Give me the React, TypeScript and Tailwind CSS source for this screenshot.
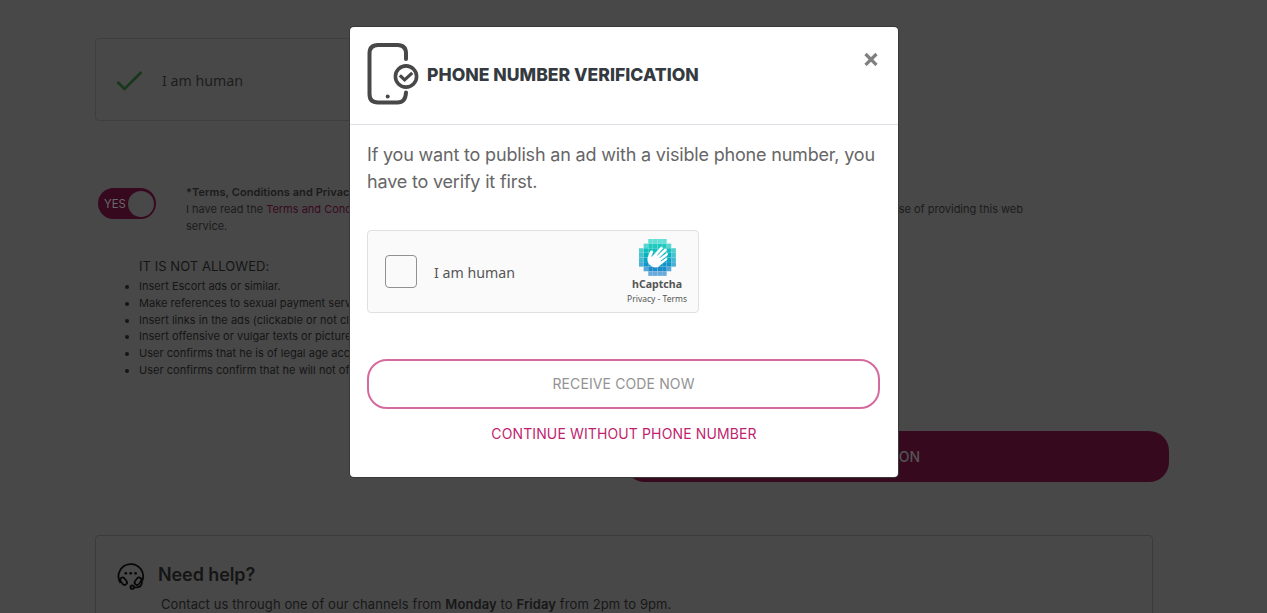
import React from "react";

const RULES = [
  "Insert Escort ads or similar.",
  "Make references to sexual payment services.",
  "Insert links in the ads (clickable or not clickable).",
  "Insert offensive or vulgar texts or pictures.",
  "User confirms that he is of legal age according to law.",
  "User confirms confirm that he will not offend others.",
];

const ROW_SPANS: [number, number][] = [
  [2, 5],
  [1, 6],
  [0, 7],
  [0, 7],
  [0, 7],
  [0, 7],
  [1, 6],
  [2, 5],
];
const ROW_COLORS = ["#2fd5c9", "#1fcabf", "#12bfbf", "#08b2bf", "#08a6c4", "#1095c8", "#1c8bca", "#3a8fd0"];

function CaptchaLogo() {
  return (
    <svg width="37" height="37" viewBox="0 0 32 32">
      {ROW_SPANS.map(([from, to], row) =>
        Array.from({ length: to - from + 1 }, (_, i) => {
          const col = from + i;
          const edge = col === from || col === to || row === 0 || row === 7;
          return (
            <rect
              key={`${row}-${col}`}
              x={col * 4}
              y={row * 4}
              width="3.9"
              height="3.9"
              fill={ROW_COLORS[row]}
              opacity={edge ? 0.75 : 1}
            />
          );
        }),
      )}
      <path
        fill="#fff"
        d="M10.7551 14.6488L11.8729 12.1471C12.2759 11.506 12.2231 10.7222 11.7872 10.2863C11.7295 10.2286 11.6636 10.1742 11.5894 10.1264C11.2827 9.9401 10.9085 9.89559 10.5672 10.001C10.1913 10.1231 9.86814 10.3704 9.65049 10.7002C9.65049 10.7002 8.12043 14.2696 7.55325 15.8657C6.98607 17.4617 7.21361 20.3868 9.39165 22.5681C11.7031 24.8796 15.0352 25.4072 17.1639 23.8095C17.2562 23.7634 17.3435 23.7073 17.4228 23.6397L23.9805 18.1632C24.2987 17.8994 24.7708 17.3537 24.3471 16.733C23.9333 16.1279 23.1512 16.5401 22.8297 16.7462L19.0555 19.4909C18.9846 19.5503 18.8791 19.5404 18.8198 19.4694L18.8164 19.4645C18.7175 19.3441 18.701 19.0275 18.8527 18.9022L24.6387 13.9906C25.1399 13.5404 25.2091 12.8843 24.8019 12.4342C24.4046 11.9924 23.7748 12.0056 23.2703 12.4606L18.0668 16.5318C17.9679 16.6109 17.8228 16.5961 17.742 16.4972L17.7387 16.4939C17.6348 16.3801 17.5952 16.1839 17.7123 16.0669L23.6062 10.3473C24.0745 9.91044 24.1009 9.17669 23.664 8.70844C23.4512 8.48091 23.156 8.349 22.8445 8.34571C22.5262 8.34241 22.2196 8.46432 21.9921 8.68687L15.968 14.3289C15.8246 14.4723 15.5443 14.3289 15.5097 14.1624C15.4965 14.1029 15.5163 14.0419 15.5608 14.0007L20.1684 8.75626C20.6268 8.32923 20.653 7.61196 20.226 7.15361C19.799 6.69526 19.0817 6.66887 18.6234 7.0959C18.5987 7.11734 18.5756 7.14042 18.5541 7.16515L11.5531 14.9089C11.3026 15.1595 10.9333 15.1726 10.7585 15.0276C10.6497 14.9385 10.6332 14.779 10.7206 14.6684L10.7551 14.6488Z"
      />
    </svg>
  );
}

function PhoneIcon() {
  return (
    <svg width="52" height="64" viewBox="0 0 52 64" fill="none" stroke="#484848" strokeWidth="4" strokeLinecap="round">
      <path d="M39 17V11.5Q39 3 30.5 3H11Q2.5 3 2.5 11.5V52Q2.5 60.5 11 60.5H30.5Q38.5 60.5 39 50.5" />
      <circle cx="39" cy="34.5" r="10.6" strokeWidth="3.6" />
      <path d="M34 34.5l3.6 3.4 6.5-6" strokeWidth="3.2" strokeLinecap="square" />
      <circle cx="20.7" cy="54.5" r="2" fill="#484848" stroke="none" />
    </svg>
  );
}

function HeadsetIcon() {
  return (
    <svg width="28" height="29" viewBox="0 0 28 29" fill="none" stroke="#080808" strokeWidth="1.8">
      <path d="M3.5 22A12.3 12.3 0 1 1 25 20.5" />
      <rect x="4.2" y="16.2" width="4.8" height="8" rx="2.4" transform="rotate(-38 6.6 20.2)" />
      <rect x="18.6" y="16.2" width="4.8" height="8" rx="2.4" transform="rotate(38 21 20.2)" />
      <path d="M25 20.5Q25 26.3 19.5 26.3H17" />
      <circle cx="15.2" cy="26.2" r="1.7" />
      <g fill="#080808" stroke="none">
        <circle cx="8.8" cy="12.3" r="1.4" />
        <circle cx="13.7" cy="12.3" r="1.4" />
        <circle cx="18.6" cy="12.3" r="1.4" />
      </g>
    </svg>
  );
}

function PageContent() {
  return (
    <div className="flex h-full flex-col pt-[38px] pl-[95px]">
      <div className="flex h-[83px] w-[332px] shrink-0 items-center rounded-[4px] border border-[#3e3e3e] pt-[2px] pl-5">
        <svg width="28" height="22" viewBox="0 0 28 22" fill="none" stroke="#17381a" strokeWidth="2.6">
          <path d="M1.5 12L8.5 19L25.5 2" />
        </svg>
        <span className="ml-[18px] font-['Noto_Sans'] text-[14.2px] text-[#1d1d1d]">I am human</span>
      </div>

      <div className="mt-[63px] flex h-[56px] shrink-0 pl-[3px]">
        <div className="mt-1 flex h-[31px] w-[58px] items-center justify-between rounded-full bg-[#37091f] pr-[2px] pl-[6px]">
          <span className="pt-[2px] text-[11.3px] text-[#696969]">YES</span>
          <span className="size-[26px] rounded-full bg-[#484848]" />
        </div>
        <div className="ml-[30px] w-[860px] text-[11px] leading-[17px] text-[#1b1b1b]">
          <p className="font-semibold tracking-[0.06px]">*Terms, Conditions and Privacy Policy</p>
          <p className="flex justify-between pr-[23px] whitespace-nowrap">
            <span>
              I have read the <span className="text-[#37091f]">Terms and Conditions</span>
            </span>
            <span>for the purpose of providing this web</span>
          </p>
          <p>service.</p>
        </div>
      </div>

      <div className="mt-[16px] h-[123px] shrink-0 pl-[44px] text-[#151515]">
        <h3 className="text-[13px] leading-[20px] tracking-[0.05px]">IT IS NOT ALLOWED:</h3>
        <ul className="mt-[2px] list-disc text-[11px] leading-[16.8px] tracking-[0.03px]">
          {RULES.map((rule) => (
            <li key={rule}>{rule}</li>
          ))}
        </ul>
      </div>

      <div className="mt-[52px] ml-[530px] flex h-[51px] w-[544px] shrink-0 items-center justify-end rounded-[20px] bg-[#37091f] pr-[249px] text-[14px] font-medium text-[#545454]">
        CONTINUE TO PUBLICATION
      </div>

      <div className="mt-[53px] h-[100px] w-[1058px] shrink-0 rounded-[4px] border border-[#3b3b3b] pt-[24px] pl-[21px]">
        <div className="flex h-[30px] items-center">
          <HeadsetIcon />
          <h2 className="mb-[2px] ml-[13px] text-[18px] font-semibold tracking-[-0.1px] text-[#151515]">Need help?</h2>
        </div>
        <p className="mt-[4px] ml-[44px] text-[13px] leading-[20px] tracking-[0.1px] text-[#171717]">
          Contact us through one of our channels from <b className="font-semibold">Monday</b> to{" "}
          <b className="font-semibold">Friday</b> from 2pm to 9pm.
        </p>
      </div>
    </div>
  );
}

function VerificationDialog() {
  return (
    <div
      role="dialog"
      className="absolute top-[27px] left-[350px] flex h-[450px] w-[548px] flex-col rounded-[4px] bg-white shadow-[0_0_0_1px_#393939]"
    >
      <header className="flex h-[98px] shrink-0 border-b border-[#dee2e6] pr-[20px] pl-[17px]">
        <div className="flex items-center">
          <div className="mb-[4px]">
            <PhoneIcon />
          </div>
          <h1 className="mb-[2px] ml-[8px] text-[17.6px] leading-[26px] font-extrabold whitespace-nowrap text-[#343a40]">
            PHONE NUMBER VERIFICATION
          </h1>
        </div>
        <button className="mt-[25px] ml-auto size-[14px]" aria-label="Close">
          <svg width="14" height="14" viewBox="0 0 14 14" stroke="#808080" strokeWidth="3.2">
            <path d="M1.5 2L12.5 13M12.5 2L1.5 13" />
          </svg>
        </button>
      </header>

      <div className="flex flex-col px-[17px] pt-[16px]">
        <p className="text-[18px] leading-[27px] tracking-[-0.18px] whitespace-nowrap text-[#666]">
          If you want to publish an ad with a visible phone number, you
          <br />
          have to verify it first.
        </p>

        <div className="mt-[35px] flex h-[83px] w-[332px] items-center rounded-[4px] border border-[#e0e0e0] bg-[#fafafa] pr-[11px] pl-[17px] font-['Noto_Sans']">
          <span className="h-[33px] w-[32px] rounded-[4px] border border-[#919191] bg-[#fafafa]" />
          <span className="mt-[2px] ml-[17px] text-[14.2px] text-[#555]">I am human</span>
          <div className="ml-auto flex h-full flex-col items-center pt-[8px] text-[#555]">
            <CaptchaLogo />
            <span className="mt-[1px] text-[10.6px] leading-[15px] font-bold">hCaptcha</span>
            <span className="text-[8.5px] leading-[13px]">Privacy - Terms</span>
          </div>
        </div>

        <button className="mt-[46px] h-[50px] w-[513px] rounded-[20px] border-2 border-[#d66a9f] pb-[2px] text-[14px] tracking-[0.12px] text-[#939393]">
          RECEIVE CODE NOW
        </button>
        <a className="mt-[15px] text-center text-[14px] leading-[20px] tracking-[0.12px] text-[#bf1f6f]">
          CONTINUE WITHOUT PHONE NUMBER
        </a>
      </div>
    </div>
  );
}

export default function App() {
  return (
    <main className="relative h-[613px] w-[1267px] overflow-hidden bg-[#484848] font-['Inter',sans-serif]">
      <PageContent />
      <VerificationDialog />
    </main>
  );
}
